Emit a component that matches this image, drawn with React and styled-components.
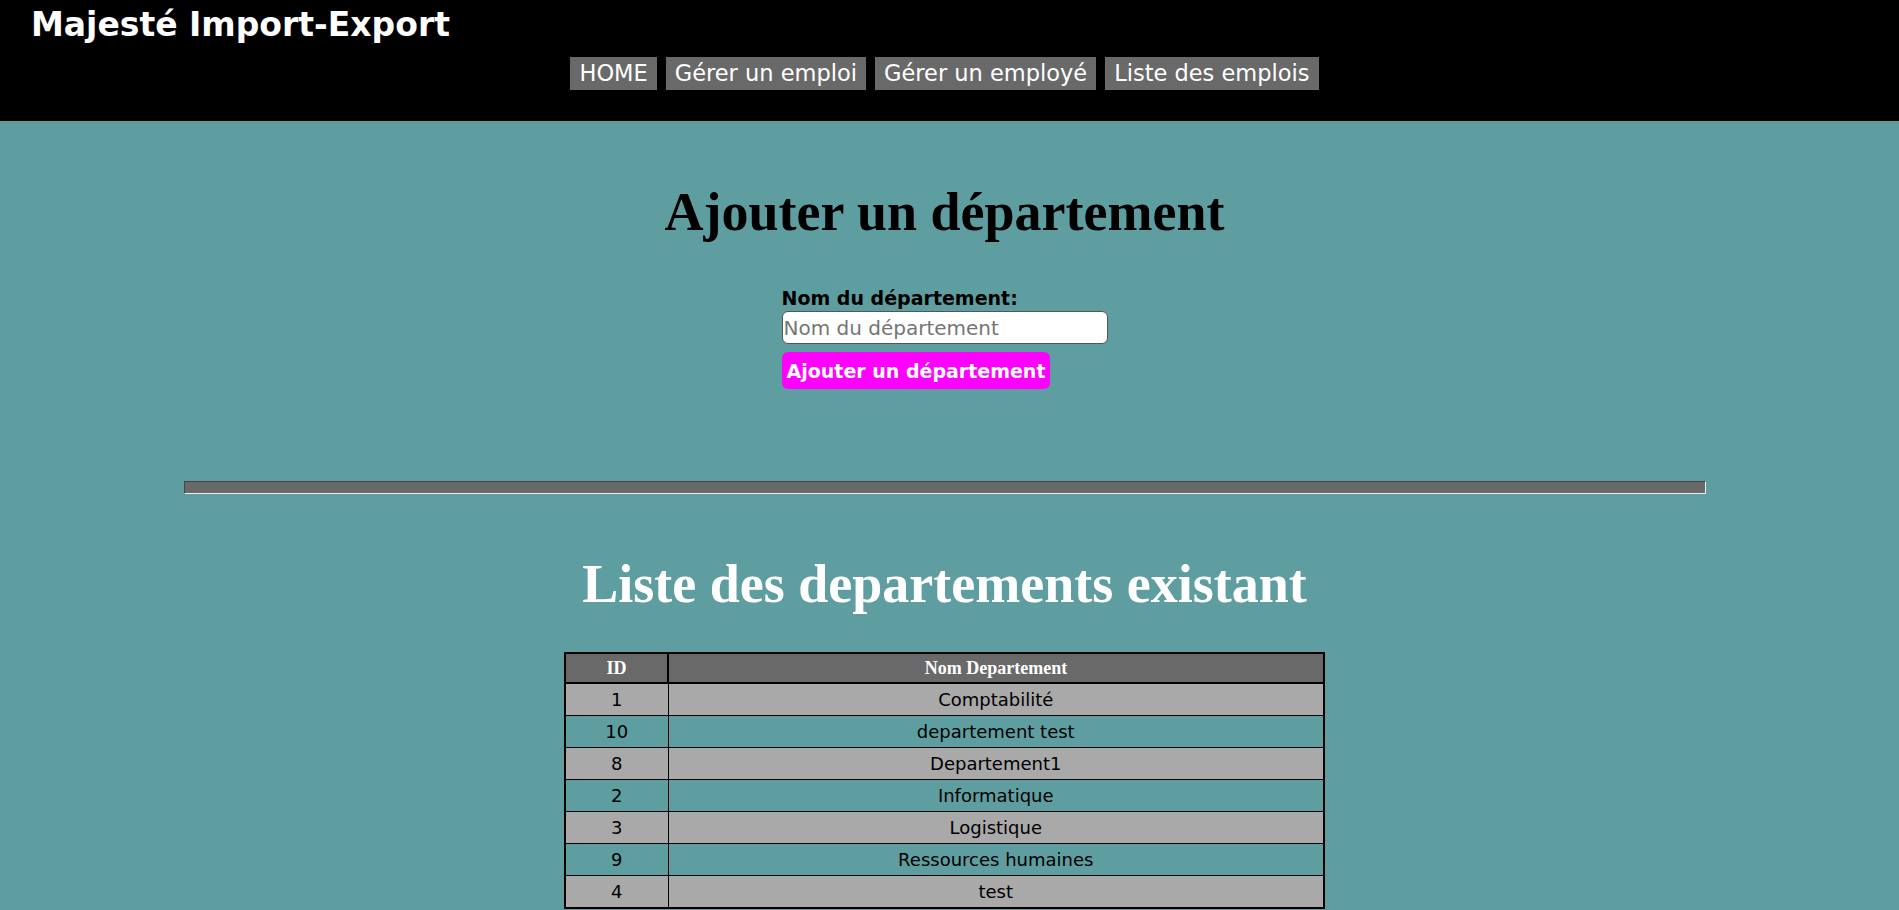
import React from 'react';
import styled, { createGlobalStyle } from 'styled-components';

const GlobalStyle = createGlobalStyle`
  html::-webkit-scrollbar {
    width: 3px;
    background: #f1f1f1;
  }
  html::-webkit-scrollbar-thumb {
    background: #c1c1c1;
  }
  body {
    margin: 0;
    background-color: #5f9ea0;
    font-family: "DejaVu Sans", Verdana, sans-serif;
  }
`;

const comic = `"Comic Sans MS", "DejaVu Sans", sans-serif`;

const Header = styled.header`
  background: #000;
  height: 121px;
  box-sizing: border-box;
  padding-top: 5px;
`;

const Brand = styled.h1`
  margin: 0;
  padding-left: 31px;
  font-family: ${comic};
  font-weight: bold;
  font-size: 33px;
  line-height: 40px;
  color: #fff;
`;

const Nav = styled.nav`
  display: flex;
  justify-content: center;
  gap: 9px;
  margin-top: 12px;
  padding-right: 10px;
`;

const NavLink = styled.a`
  background: #696969;
  color: #fff;
  font-size: 22.5px;
  line-height: 33px;
  height: 33px;
  padding: 0 9px;
  text-decoration: none;
`;

const Main = styled.main`
  display: flex;
  flex-direction: column;
  align-items: center;
  padding: 0 10px 40px 0;
`;

const Title = styled.h2`
  margin: ${(p) => p.$top}px 0 0;
  font-family: "Liberation Serif", "Times New Roman", serif;
  font-weight: bold;
  font-size: 54px;
  line-height: 62px;
  color: ${(p) => p.$color};
`;

const Form = styled.form`
  width: 326px;
  margin-top: 44px;
  display: flex;
  flex-direction: column;
  align-items: flex-start;
`;

const Label = styled.label`
  font-family: ${comic};
  font-weight: bold;
  font-size: 19px;
  line-height: 22px;
  color: #000;
`;

const Input = styled.input`
  box-sizing: border-box;
  width: 100%;
  height: 33px;
  margin-top: 2px;
  padding: 0 1px;
  border: 1px solid #555;
  border-radius: 6px;
  background: #fff;
  font-family: ${comic};
  font-size: 20px;
  &::placeholder {
    color: #757575;
  }
`;

const Button = styled.button`
  margin-top: 8px;
  height: 37px;
  padding: 0 5px;
  border: none;
  border-radius: 6px;
  background: #ff00ff;
  color: #fff;
  font-family: ${comic};
  font-weight: bold;
  font-size: 19px;
`;

const Rule = styled.hr`
  box-sizing: border-box;
  width: 1522px;
  height: 13px;
  margin: 92px 0 0;
  background: #696969;
  border: 1px inset #eee;
  border-top-color: #9a9a9a;
  border-left-color: #9a9a9a;
`;

const Table = styled.table`
  width: 761px;
  margin-top: 37px;
  border-collapse: collapse;
  border: 2px solid #000;
`;

const Th = styled.th`
  background: #696969;
  color: #fff;
  font-family: "Liberation Serif", "Times New Roman", serif;
  font-weight: bold;
  font-size: 18px;
  height: 28px;
  padding: 0;
  border: 2px solid #000;
  width: ${(p) => (p.$narrow ? '101px' : 'auto')};
`;

const Row = styled.tr`
  background: ${(p) => (p.$odd ? '#a9a9a9' : 'transparent')};
`;

const Td = styled.td`
  text-align: center;
  font-size: 18px;
  height: 31px;
  padding: 0;
  color: #000;
  border: 1px solid #000;
`;

const departements = [
  [1, 'Comptabilité'],
  [10, 'departement test'],
  [8, 'Departement1'],
  [2, 'Informatique'],
  [3, 'Logistique'],
  [9, 'Ressources humaines'],
  [4, 'test'],
];

const links = ['HOME', 'Gérer un emploi', 'Gérer un employé', 'Liste des emplois'];

export default function App() {
  return (
    <>
      <GlobalStyle />
      <Header>
        <Brand>Majesté Import-Export</Brand>
        <Nav>
          {links.map((l) => (
            <NavLink key={l} href="#">{l}</NavLink>
          ))}
        </Nav>
      </Header>
      <Main>
        <Title $top={60} $color="#000">Ajouter un département</Title>
        <Form onSubmit={(e) => e.preventDefault()}>
          <Label htmlFor="nom">Nom du département:</Label>
          <Input id="nom" placeholder="Nom du département" />
          <Button type="submit">Ajouter un département</Button>
        </Form>
        <Rule />
        <Title $top={59} $color="#fff">Liste des departements existant</Title>
        <Table>
          <thead>
            <tr>
              <Th $narrow>ID</Th>
              <Th>Nom Departement</Th>
            </tr>
          </thead>
          <tbody>
            {departements.map(([id, nom], i) => (
              <Row key={id} $odd={i % 2 === 0}>
                <Td>{id}</Td>
                <Td>{nom}</Td>
              </Row>
            ))}
          </tbody>
        </Table>
      </Main>
    </>
  );
}
